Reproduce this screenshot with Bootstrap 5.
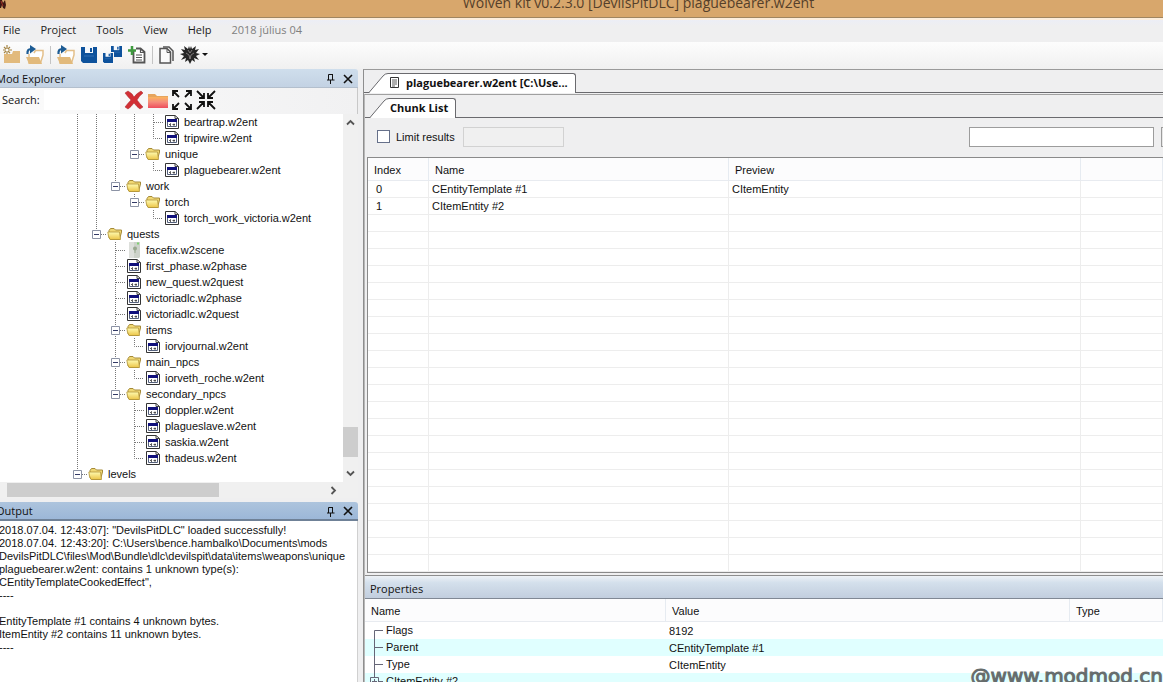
<!DOCTYPE html>
<html lang="en">
<head>
<meta charset="utf-8">
<meta name="viewport" content="width=device-width, initial-scale=1">
<title>Wolven kit</title>
<link href="https://cdn.jsdelivr.net/npm/bootstrap@5.3.0/dist/css/bootstrap.min.css" rel="stylesheet">
<style>
  :root { --ui: "Open Sans", "Noto Sans", sans-serif; --classic: "Liberation Sans", Arial, sans-serif; }
  body { font: 11px/16px var(--ui); color: #111; background: #efeff0; }
  button { color: inherit; }
  svg { display: block; flex: none; }
  .titlebar { height: 18px; background: #d8a76c; border-bottom: 1px solid #a08560; }
  .titlebar h1 { font: 14px/20px var(--ui); color: #55402a; margin: -7px 0 0 114px; }
  .menubar { height: 24px; border-top: 2px solid #fdeedd; padding: 0 3px 2px; background: linear-gradient(#eceef6, #efeff0 6px); }
  .menu-items { gap: 20px; }
  .menubar a { color: #1b1b1b; text-decoration: none; }
  .menubar .when { color: #808080; }
  .toolbar-strip { height: 27px; gap: 6px; padding: 0 3px 2px; background: linear-gradient(#fdfdfd, #f0f0f0); }
  .tool { border: 0; background: none; padding: 0; display: flex; align-items: center; }
  .divider { width: 1px; height: 18px; background: #c4c4c4; }
  .shell { display: grid; grid-template-columns: 358px 1fr; column-gap: 5px; min-height: 0; }
  .shell > * { min-width: 0; min-height: 0; }
  .pane-title { height: 19px; padding: 1px 5px 0 0; background: linear-gradient(#cfdeec, #c3d2e3); border-bottom: 1px solid #b3bfcd; border-radius: 0 3px 0 0; }
  .pane-title.active { background: linear-gradient(#adc4dd, #9cb7d8); border-bottom: 2px solid #6f8197; }
  .pane-title h2, .prop-title h2 { font: inherit; }
  .bleed { margin-left: -4px; }
  .searchbar { height: 26px; padding: 0 0 2px 2px; background: linear-gradient(90deg, #fbfbfb, #f1f1f2); border-right: 1px solid #c8c8c8; }
  .searchbar input { width: 76px; height: 20px; border: 0; background: #fff; }
  .tree { font: 11px/16px var(--classic); background: #fff; padding-left: 68px; }
  .tree li { height: 16px; display: flex; align-items: center; white-space: nowrap; }
  .guide { width: 19px; height: 16px; flex: none; }
  .glyph { width: 16px; height: 16px; margin: 0 4px 0 1px; }
  .toggle { border: 0; padding: 0; background: none; }
  .vbar { width: 15px; background: #f0f0f0; }
  .vthumb { height: 30px; background: #cdcdcd; margin-bottom: 8px; }
  .hbar { height: 16px; padding-right: 20px; background: #f0f0f0; }
  .hthumb { width: 212px; height: 14px; background: #cdcdcd; margin-left: 7px; }
  .output { height: 180px; }
  .log { font: 11px/13px var(--classic); background: #fff; border-right: 1px solid #d0d0d0; white-space: pre; padding-top: 3px; }
  .log p { margin: 0 0 0 -1px; }
  .work { border-left: 1px solid #8e8e8e; border-top: 1px solid #9a9a9a; }
  .tabs { height: 23px; border-bottom: 1px solid #6a6a6e; }
  .doc-tab { margin-bottom: -1px; height: 20px; border: 0; background: none; padding: 0; font: bold 11px/18px var(--ui); }
  .doc-tab span { height: 20px; background: #fff; border: 1px solid #6a6a6e; border-width: 1px 1px 0 0; border-radius: 0 3px 0 0; padding: 0 7px 2px 1px; display: flex; align-items: center; gap: 6px; }
  .inner { border-left: 1px solid #b8b8b8; border-top: 1px solid #a0a0a0; margin-top: 1px; }
  .filters { height: 39px; font: 11px/16px var(--classic); padding: 0 0 2px 12px; }
  .filters .form-check-input { width: 13px; height: 13px; margin: 0; border-radius: 0; border: 1px solid #66708a; }
  .filters label { margin: 0 8px 0 6px; }
  .flat { height: 20px; border: 1px solid #9c9c9c; background: #fff; padding: 0 4px; }
  .flat:disabled { border-color: #d2d2d2; background: #f0f0f0; }
  .w-limit { width: 101px; } .w-find { width: 185px; margin-right: 7px; }
  .go { width: 60px; margin-right: -58px; background: #e8e8e8; flex: none; }
  .listview { background: #fff; border: 1px solid #8a8a8a; border-right: 0; margin-left: 2px; }
  table.data { width: 100%; table-layout: fixed; border-collapse: separate; border-spacing: 0; font: 11px/16px var(--classic); }
  .data th { font-weight: 400; height: 23px; padding: 2px 6px 0; background: #fcfcfd; border-bottom: 1px solid #e8ebf0; border-right: 1px solid #e6ebf1; }
  .data td { height: 17px; padding: 0 3px; white-space: nowrap; }
  .chunks td { border-bottom: 1px solid #ededed; border-right: 1px solid #ededed; }
  .chunks td:first-child { padding-left: 8px; }
  .c-index { width: 61px; } .c-name { width: 300px; } .c-preview { width: 352px; }
  .p-name { width: 301px; } .p-value { width: 404px; }
  .prop { height: 107px; border-top: 1px solid #8e8e8e; margin-top: 2px; background: #fff; }
  .prop-title { height: 23px; padding: 4px 0 0 5px; background: linear-gradient(#eef2f6, #d4e0ec 30%, #c2cede); border-bottom: 1px solid #808894; }
  .prop .data tbody tr:nth-child(even) { background: #e0ffff; }
  .prop .data tbody td:first-child { padding-left: 5px; }
  .watermark { position: absolute; right: 0; bottom: -6px; font: 20px/24px "DejaVu Sans", sans-serif; color: #666c6c; -webkit-text-stroke: 1px #666c6c; }
</style>
</head>
<body class="vh-100 d-flex flex-column overflow-hidden position-relative">

<svg class="position-absolute" width="0" height="0" aria-hidden="true">
  <defs>
    <linearGradient id="gold" x2="0" y2="1"><stop stop-color="#fffbb0"/><stop offset="1" stop-color="#ecc548"/></linearGradient>
    <linearGradient id="rose" x2="0" y2="1"><stop stop-color="#fbb45e"/><stop offset=".45" stop-color="#f58d7c"/><stop offset="1" stop-color="#ee4d5c"/></linearGradient>
  </defs>
  <symbol id="folder" viewBox="0 0 16 16">
    <path d="M2 12V4.500L3.500 2.500H7L8.500 4H14.500V6L12.500 13.500H3.500Z" fill="#f0d874" stroke="#a58a38"/>
    <path d="M.8 6H12.500L13.500 13.500H3Q1 10 .8 6Z" fill="url(#gold)" stroke="#b2953a" stroke-width=".8"/>
  </symbol>
  <symbol id="file" viewBox="0 0 16 16">
    <path d="M1.500 1.500H11L14.500 4.500V14.500H1.500Z" fill="#fff" stroke="#343434"/>
    <path d="M11 1.500V4.500H14.500" fill="none" stroke="#444"/>
    <path d="M3.500 5.500H12.500V12.500H3.500Z" fill="#fff" stroke="#54607c"/>
    <path d="M3 5H13V8H3Z" fill="#10107c"/><path d="M5 11L6.500 9.500V12M8.500 10.500H11M10 9.500V12" stroke="#333" stroke-width=".8" fill="none"/>
  </symbol>
  <symbol id="scene" viewBox="0 0 16 16">
    <path d="M3 0H14V15L13 16H3Z" fill="#cdd2ca"/><path d="M3 0H8V16H3Z" fill="#dddfdb"/>
    <circle cx="9" cy="6.500" r="2" fill="#98a88e"/><path d="M9 8V11" stroke="#98a88e"/><path d="M11 1.500H13" stroke="#7dcf70" stroke-width="2"/>
  </symbol>
  <symbol id="open" viewBox="0 0 18 20">
    <path d="M3 9V18H14.500L17 10V5.500H9.500L8 8" fill="#fff" stroke="#e4c08a" stroke-width="1.500"/>
    <path d="M0 12H13L16 19H3Z" fill="#e2ba7c"/>
    <path d="M1.500 9Q1 4 5 4" fill="none" stroke="#1d5c94" stroke-width="2.200"/><path d="M4 0L10 4L4 8.500Z" fill="#1d5c94"/>
  </symbol>
  <symbol id="disk" viewBox="0 0 16 16">
    <path d="M0 0H16V16H2L0 14Z" fill="#0e529c"/><path d="M4 0H12V6H4Z" fill="#f4f8fc"/><path d="M9 1H11V5H9Z" fill="#0e529c"/><path d="M3 9H13" stroke="#326fb2"/>
  </symbol>
  <symbol id="pin" viewBox="0 0 9 11"><path d="M2.500 7V1.500H6.500V7M1 7H8.500M4.500 7V11" fill="none" stroke="#111"/><path d="M6 1H7V7H6Z" fill="#111"/></symbol>
  <symbol id="cross" viewBox="0 0 10 10"><path d="M1 1L9 9M9 1L1 9" stroke="#111" stroke-width="1.600"/></symbol>
</svg>

<header class="titlebar flex-shrink-0 overflow-hidden d-flex justify-content-center position-relative">
  <svg class="position-absolute start-0 top-0" width="8" height="10" viewBox="0 0 8 10" aria-hidden="true"><path d="M0 0H2L3 3L5 0L6 5L5 9L3 8L2 5L1 8H0Z" fill="#3c1813"/><path d="M1 1L3 6" stroke="#a03028"/></svg>
  <h1 class="text-nowrap">Wolven kit v0.2.3.0 [DevilsPitDLC] plaguebearer.w2ent</h1>
</header>

<nav class="menubar flex-shrink-0 d-flex align-items-center text-nowrap" aria-label="Main">
  <div class="d-flex menu-items">
    <a href="#">File</a><a href="#">Project</a><a href="#">Tools</a><a href="#">View</a><a href="#">Help</a><span class="when">2018 július 04</span>
  </div>
</nav>

<div class="toolbar-strip flex-shrink-0 d-flex align-items-center" role="toolbar" aria-label="Tools">
  <button class="tool" aria-label="New mod"><svg width="17" height="20" viewBox="0 0 17 20"><path d="M1 9H9L10 6H17V18H1Z" fill="#e2ba7c"/><path d="M4 0V9M-1 5H9M1 2L7 8M7 2L1 8" stroke="#a48443" stroke-width="1.200"/><circle cx="4" cy="5" r="1.500" fill="#fff"/></svg></button>
  <button class="tool" aria-label="Open mod"><svg width="18" height="20"><use href="#open"/></svg></button>
  <span class="divider"></span>
  <button class="tool" aria-label="Open file"><svg width="18" height="20"><use href="#open"/></svg></button>
  <button class="tool" aria-label="Save"><svg width="16" height="16"><use href="#disk"/></svg></button>
  <button class="tool" aria-label="Save all"><svg width="19" height="18" viewBox="0 0 19 18"><use href="#disk" x="8" y="0" width="11" height="11"/><path d="M0 6H11V18H0Z" fill="#f7f7f7"/><use href="#disk" x="0" y="7" width="10" height="10"/></svg></button>
  <button class="tool" aria-label="Add chunk"><svg width="18" height="18" viewBox="0 0 18 18"><path d="M5.500 5V16.500H16.500V6L12.500 2.500H8" fill="#fff" stroke="#555" stroke-width="1.800"/><path d="M12.500 2V6.500H16.500M8 9H14M8 11.500H14M8 14H14" fill="none" stroke="#555" stroke-width="1.200"/><path d="M4 0V9M0 4.500H8" stroke="#3f9a3f" stroke-width="2.500"/></svg></button>
  <span class="divider"></span>
  <button class="tool" aria-label="Copy"><svg width="15" height="18" viewBox="0 0 15 18"><path d="M4 1H10L14 5V15" fill="none" stroke="#555" stroke-width="1.500"/><path d="M1 2.500H8L11.500 6V17H1Z" fill="#fafafa" stroke="#555" stroke-width="1.500"/><path d="M8 3V6.500H11" fill="none" stroke="#555"/></svg></button>
  <button class="tool" aria-label="Launch game"><svg width="28" height="18" viewBox="0 0 28 18"><path d="M10 3L11 0L12 3L16 0L15 4L19 3L16 7L20 8L16 10L19 14L14 12L15 16L12 14L10 18L8 14L5 16L6 12L1 14L4 10L0 8L4 7L1 3L5 4L4 0L8 3L9 0Z" fill="#252525"/><path d="M6 7L9 9L10 13L11 9L14 7M8 4L10 7L12 4" stroke="#a39c9c" stroke-width=".7" fill="none"/><path d="M22 7H28L25 10Z" fill="#111"/></svg></button>
</div>

<main class="shell flex-grow-1">
  <div class="d-flex flex-column">
    <section class="d-flex flex-column flex-grow-1 overflow-hidden" aria-label="Mod Explorer">
      <div class="pane-title d-flex align-items-center flex-shrink-0">
        <h2 class="mb-0 me-auto bleed">Mod Explorer</h2>
        <button class="tool me-2" aria-label="Pin"><svg width="9" height="11"><use href="#pin"/></svg></button>
        <button class="tool" aria-label="Close"><svg width="10" height="10"><use href="#cross"/></svg></button>
      </div>
      <div class="searchbar d-flex align-items-center flex-shrink-0">
        <label class="pe-1" for="find">Search:</label><input id="find" type="text">
        <div class="d-flex align-items-center ms-1 gap-1">
          <button class="tool" aria-label="Clear"><svg width="20" height="20" viewBox="0 0 20 20"><path d="M1 3L4 1Q8 3 10 7Q13 3 17 1L19 3Q15 6 13 10Q16 14 19 17L16 19Q13 17 10 13Q7 17 4 19L1 17Q4 13 7 10Q4 7 1 3Z" fill="#d22f35" stroke="#a9272b" stroke-width=".5"/></svg></button>
          <button class="tool" aria-label="Show folders"><svg width="20" height="18" viewBox="0 0 20 18"><path d="M0 3H7L9 5H20V16H0Z" fill="#e6a55e"/><path d="M0 6H20V17H0Z" fill="url(#rose)"/></svg></button>
          <button class="tool" aria-label="Expand all"><svg width="20" height="20" viewBox="0 0 20 20" fill="none" stroke="#111" stroke-width="1.800"><path d="M1 6V1H6M1 1L7 7M14 1H19V6M19 1L13 7M1 14V19H6M1 19L7 13M14 19H19V14M19 19L13 13"/></svg></button>
          <button class="tool" aria-label="Collapse all"><svg width="20" height="20" viewBox="0 0 20 20" fill="none" stroke="#111" stroke-width="1.800"><path d="M8 3V8H3M8 8L1 1M12 3V8H17M12 8L19 1M8 17V12H3M8 12L1 19M12 17V12H17M12 12L19 19"/></svg></button>
        </div>
      </div>
      <div class="d-flex flex-grow-1 overflow-hidden bg-white">
        <ul class="tree list-unstyled m-0 flex-grow-1 overflow-hidden" id="tree"></ul>
        <div class="vbar d-flex flex-column align-items-stretch">
          <svg class="mx-auto my-1" width="9" height="9" viewBox="0 0 9 9" fill="none" stroke="#555" stroke-width="1.800"><path d="M1 6.500L4.500 3L8 6.500"/></svg>
          <div class="vthumb mt-auto"></div>
          <svg class="mx-auto my-1" width="9" height="9" viewBox="0 0 9 9" fill="none" stroke="#555" stroke-width="1.800"><path d="M1 2.500L4.500 6L8 2.500"/></svg>
        </div>
      </div>
      <div class="hbar d-flex align-items-center flex-shrink-0">
        <div class="hthumb me-auto"></div>
        <svg width="9" height="9" viewBox="0 0 9 9" fill="none" stroke="#555" stroke-width="1.800"><path d="M2.500 1L6 4.500L2.500 8"/></svg>
      </div>
    </section>
    <section class="output d-flex flex-column flex-shrink-0 mt-1 overflow-hidden" aria-label="Output">
      <div class="pane-title active d-flex align-items-center flex-shrink-0">
        <h2 class="mb-0 me-auto bleed">Output</h2>
        <button class="tool me-2" aria-label="Pin"><svg width="9" height="11"><use href="#pin"/></svg></button>
        <button class="tool" aria-label="Close"><svg width="10" height="10"><use href="#cross"/></svg></button>
      </div>
      <div class="log flex-grow-1 overflow-hidden"><p>2018.07.04. 12:43:07]: "DevilsPitDLC" loaded successfully!
2018.07.04. 12:43:20]: C:\Users\bence.hambalko\Documents\mods
DevilsPitDLC\files\Mod\Bundle\dlc\devilspit\data\items\weapons\unique
plaguebearer.w2ent: contains 1 unknown type(s):
CEntityTemplateCookedEffect",
----

EntityTemplate #1 contains 4 unknown bytes.
ItemEntity #2 contains 11 unknown bytes.
----</p></div>
    </section>
  </div>

  <div class="work d-flex flex-column overflow-hidden">
    <div class="tabs d-flex align-items-end flex-shrink-0 ps-1">
      <button class="doc-tab d-flex"><svg width="20" height="20" viewBox="0 0 20 20"><path d="M1 20L15 3Q17 .5 20 .5V20Z" fill="#fff"/><path d="M1 19.500L15 3Q17 .5 20 .5" fill="none" stroke="#6a6a6e"/></svg><span>
        <svg width="11" height="13" viewBox="0 0 11 13" fill="#fff" stroke="#333"><path d="M1.500 1.500H9.500V11.500H1.500Z"/><path d="M3 4H8M3 6H8M3 8H8M3 10H6" stroke-width=".8"/></svg>plaguebearer.w2ent [C:\Use...</span></button>
    </div>
    <div class="inner d-flex flex-column flex-grow-1 overflow-hidden">
      <div class="tabs d-flex align-items-end flex-shrink-0 ps-1">
        <button class="doc-tab d-flex"><svg width="20" height="20" viewBox="0 0 20 20"><path d="M1 20L15 3Q17 .5 20 .5V20Z" fill="#fff"/><path d="M1 19.500L15 3Q17 .5 20 .5" fill="none" stroke="#6a6a6e"/></svg><span>Chunk List</span></button>
      </div>
      <div class="filters d-flex align-items-center flex-shrink-0">
        <input class="form-check-input" type="checkbox" id="limit"><label for="limit">Limit results</label>
        <input class="flat w-limit" type="text" aria-label="Limit" disabled>
        <input class="flat w-find ms-auto" type="text" aria-label="Search chunks"><button class="flat go" aria-label="Search"></button>
      </div>
      <div class="listview flex-grow-1 overflow-hidden">
        <table class="data chunks">
          <colgroup><col class="c-index"><col class="c-name"><col class="c-preview"><col></colgroup>
          <thead><tr><th>Index</th><th>Name</th><th>Preview</th><th></th></tr></thead>
          <tbody id="chunks">
            <tr><td>0</td><td>CEntityTemplate #1</td><td>CItemEntity</td><td></td></tr>
            <tr><td>1</td><td>CItemEntity #2</td><td></td><td></td></tr>
          </tbody>
        </table>
      </div>
      <section class="prop flex-shrink-0 overflow-hidden" aria-label="Properties">
        <div class="prop-title d-flex align-items-center"><h2 class="m-0">Properties</h2></div>
        <table class="data">
          <colgroup><col class="p-name"><col class="p-value"><col></colgroup>
          <thead><tr><th>Name</th><th>Value</th><th>Type</th></tr></thead>
          <tbody>
            <tr><td><div class="d-flex"><svg width="16" height="17" fill="none" stroke="#667"><path d="M4.500 17V8.500H13"/></svg>Flags</div></td><td>8192</td><td></td></tr>
            <tr><td><div class="d-flex"><svg width="16" height="17" fill="none" stroke="#667"><path d="M4.500 0V17M4.500 8.500H13"/></svg>Parent</div></td><td>CEntityTemplate #1</td><td></td></tr>
            <tr><td><div class="d-flex"><svg width="16" height="17" fill="none" stroke="#667"><path d="M4.500 0V17M4.500 8.500H13"/></svg>Type</div></td><td>CItemEntity</td><td></td></tr>
            <tr><td><div class="d-flex"><svg width="16" height="17" fill="none" stroke="#667"><path d="M4.500 0V4M.5 4.500H8.500V12.500H.5ZM2 8.500H7M4.500 6V11M9 8.500H13"/></svg>CItemEntity #2</div></td><td></td><td></td></tr>
          </tbody>
        </table>
      </section>
    </div>
  </div>
</main>
<div class="watermark">@www.modmod.cn</div>

<script>
  // Guides: | line, - blank, + branch, L last branch, B open node, E last open node
  const rows = [
    ['||||+', 'file', 'beartrap.w2ent'], ['||||L', 'file', 'tripwire.w2ent'],
    ['|||E', 'folder', 'unique'], ['|||-L', 'file', 'plaguebearer.w2ent'],
    ['||E', 'folder', 'work'], ['||-E', 'folder', 'torch'], ['||--L', 'file', 'torch_work_victoria.w2ent'],
    ['|E', 'folder', 'quests'], ['|-+', 'scene', 'facefix.w2scene'],
    ['|-+', 'file', 'first_phase.w2phase'], ['|-+', 'file', 'new_quest.w2quest'],
    ['|-+', 'file', 'victoriadlc.w2phase'], ['|-+', 'file', 'victoriadlc.w2quest'],
    ['|-B', 'folder', 'items'], ['|-|L', 'file', 'iorvjournal.w2ent'],
    ['|-B', 'folder', 'main_npcs'], ['|-|L', 'file', 'iorveth_roche.w2ent'],
    ['|-E', 'folder', 'secondary_npcs'], ['|--+', 'file', 'doppler.w2ent'],
    ['|--+', 'file', 'plagueslave.w2ent'], ['|--+', 'file', 'saskia.w2ent'],
    ['|--L', 'file', 'thadeus.w2ent'], ['E', 'folder', 'levels']
  ];
  const lines = {
    '|': 'M9.500 0V16', '-': '', '+': 'M9.500 0V16M10 8.500H19', 'L': 'M9.500 0V8.500H19',
    'B': 'M9.500 0V16M10 8.500H19', 'E': 'M9.500 0V8M10 8.500H19'
  };
  const guide = g => {
    const box = 'BE'.includes(g) ? '<path d="M5.500 4.500H13.500V12.500H5.500Z" fill="#fff" stroke="#8c93a5"/><path d="M7 8.500H12" stroke="#333a66"/>' : '';
    const art = `<svg width="19" height="16"><path d="${lines[g]}" fill="none" stroke="#777" stroke-dasharray="1 1"/>${box}</svg>`;
    return box ? `<button class="guide toggle" aria-label="Collapse">${art}</button>` : `<span class="guide">${art}</span>`;
  };
  document.getElementById('tree').innerHTML = rows.map(([g, icon, name]) =>
    `<li>${[...g].map(guide).join('')}<svg class="glyph"><use href="#${icon}"/></svg>${name}</li>`).join('');
  document.getElementById('chunks').insertAdjacentHTML('beforeend', '<tr><td></td><td></td><td></td><td></td></tr>'.repeat(24));
</script>
<script src="https://cdn.jsdelivr.net/npm/bootstrap@5.3.0/dist/js/bootstrap.bundle.min.js"></script>
</body>
</html>
